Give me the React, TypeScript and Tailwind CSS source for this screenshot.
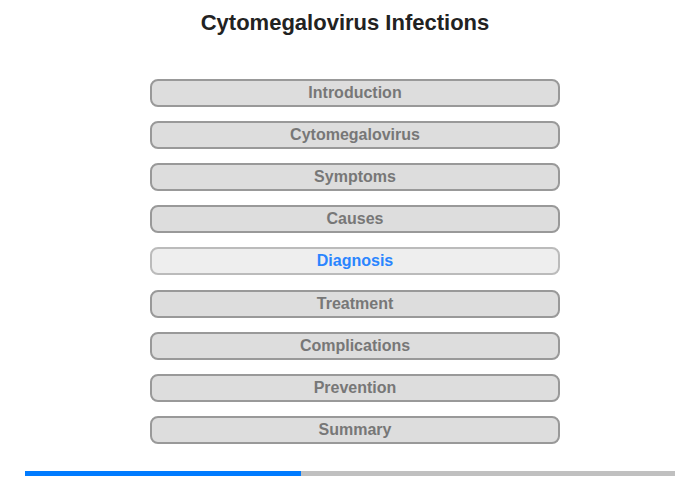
const sections = [
  "Introduction",
  "Cytomegalovirus",
  "Symptoms",
  "Causes",
  "Diagnosis",
  "Treatment",
  "Complications",
  "Prevention",
  "Summary",
]

const active = "Diagnosis"

export default function App() {
  return (
    <div className="w-[700px] h-[480px] bg-white font-['Liberation_Sans',Arial,sans-serif] flex flex-col">
      <h1 className="pt-[10px] h-[79px] text-center text-[22px] leading-[26px] font-bold text-[#222] pr-[10px]">
        Cytomegalovirus Infections
      </h1>

      <div className="ml-[150px] w-[410px] flex flex-col gap-[14.12px]">
        {sections.map((name) => {
          const isActive = name === active
          return (
            <button
              key={name}
              className={`h-[28px] rounded-[8px] border-2 text-[16px] leading-[20px] font-bold text-center ${
                isActive ? "bg-[#eeeeee] border-[#bbbbbb] text-[#2a85ff]" : "bg-[#dddddd] border-[#999999] text-[#777777]"
              }`}
            >
              {name}
            </button>
          )
        })}
      </div>

      <div className="mt-auto mb-[4px] mx-[25px] h-[5px] flex">
        <div className="w-[276px] bg-[#007bff]" />
        <div className="flex-1 bg-[#c0c0c0]" />
      </div>
    </div>
  )
}
